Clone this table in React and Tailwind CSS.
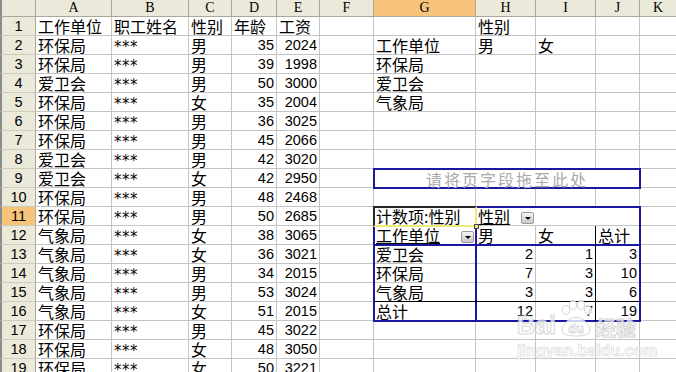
import React from 'react';

const COLS = ['A', 'B', 'C', 'D', 'E', 'F', 'G', 'H', 'I', 'J', 'K'];
const COL_START = ['col-start-1', 'col-start-2', 'col-start-3', 'col-start-4', 'col-start-5', 'col-start-6', 'col-start-7', 'col-start-8', 'col-start-9', 'col-start-10', 'col-start-11', 'col-start-12'];
const ROW_START = ['row-start-1', 'row-start-2', 'row-start-3', 'row-start-4', 'row-start-5', 'row-start-6', 'row-start-7', 'row-start-8', 'row-start-9', 'row-start-10', 'row-start-11', 'row-start-12', 'row-start-13', 'row-start-14', 'row-start-15', 'row-start-16', 'row-start-17', 'row-start-18', 'row-start-19', 'row-start-20'];

const CJK = "font-['Noto_Sans_CJK_SC',sans-serif] text-[16px]";
const NUM = "font-['Liberation_Sans',Arial,sans-serif] text-[14.5px]";

// source list, columns A..E
const rows = [
  ['工作单位', '职工姓名', '性别', '年龄', '工资'],
  ['环保局', '***', '男', 35, 2024],
  ['环保局', '***', '男', 39, 1998],
  ['爱卫会', '***', '男', 50, 3000],
  ['环保局', '***', '女', 35, 2004],
  ['环保局', '***', '男', 36, 3025],
  ['环保局', '***', '男', 45, 2066],
  ['爱卫会', '***', '男', 42, 3020],
  ['爱卫会', '***', '女', 42, 2950],
  ['环保局', '***', '男', 48, 2468],
  ['环保局', '***', '男', 50, 2685],
  ['气象局', '***', '女', 38, 3065],
  ['气象局', '***', '女', 36, 3021],
  ['气象局', '***', '男', 34, 2015],
  ['气象局', '***', '男', 53, 3024],
  ['气象局', '***', '女', 51, 2015],
  ['环保局', '***', '男', 45, 3022],
  ['环保局', '***', '女', 48, 3050],
  ['环保局', '***', '女', 50, 3221],
];

// everything right of the list
const side = {
  H1: '性别', G2: '工作单位', H2: '男', I2: '女', G3: '环保局', G4: '爱卫会', G5: '气象局',
  G11: '计数项:性别',
  H12: '男', I12: '女', J12: '总计',
  G13: '爱卫会', H13: 2, I13: 1, J13: 3,
  G14: '环保局', H14: 7, I14: 3, J14: 10,
  G15: '气象局', H15: 3, I15: 3, J15: 6,
  G16: '总计', H16: 12, I16: 7, J16: 19,
};

const NO_RIGHT = ['G9', 'H9', 'I9', 'H11', 'I11'];

const DropButton = () => (
  <span className="mb-[1px] mr-[1px] ml-auto flex h-[12px] w-[13px] shrink-0 items-center justify-center rounded-[2px] border border-[#9a9a9a] bg-linear-to-b from-[#f6f6f6] to-[#c9c9c9]">
    <span className="h-0 w-0 border-x-[3px] border-t-[3px] border-x-transparent border-t-black" />
  </span>
);

const Text = ({ value }) => {
  if (typeof value === 'number') {
    return <span className={`${NUM} leading-[18px] text-black`}>{value}</span>;
  }
  if (value === '***') {
    return <span className="translate-y-[2px] font-['DejaVu_Sans',sans-serif] text-[15px] tracking-[0.5px] leading-[18px] text-black">***</span>;
  }
  return <span className={`${CJK} leading-[18px] text-black`}>{value}</span>;
};

const Cell = ({ c, r, value, children }) => {
  const name = COLS[c] + r;
  const isNum = typeof value === 'number';
  return (
    <div
      className={`${COL_START[c + 1]} ${ROW_START[r]} flex items-end whitespace-nowrap border-b border-[#c4c4c4] bg-white ${NO_RIGHT.includes(name) ? 'border-r border-r-white' : c === 10 ? '' : 'border-r'} ${isNum ? 'justify-end pr-[2px]' : 'pl-[2px]'}`}
    >
      {children || (value !== undefined && <Text value={value} />)}
    </div>
  );
};

export default function App() {
  const cells = [];

  cells.push(
    <div key="corner" className="col-start-1 row-start-1 border-l-2 border-r border-b border-l-[#8c8c8c] border-r-[#aca899] border-b-[#aca899] bg-[#ebe9d9]" />
  );
  COLS.forEach((L, i) =>
    cells.push(
      <div
        key={L}
        className={`${COL_START[i + 1]} row-start-1 flex items-center justify-center border-b border-[#aca899] ${i === 10 ? '' : 'border-r'} ${L === 'G' ? 'bg-[#f8c47b]' : 'bg-[#ebe9d9]'} font-['Liberation_Serif',serif] text-[14px] leading-none text-black`}
      >
        {L}
      </div>
    )
  );

  for (let r = 1; r <= 19; r++) {
    cells.push(
      <div
        key={'h' + r}
        className={`col-start-1 ${ROW_START[r]} flex items-end justify-center border-l-2 border-r border-b border-l-[#8c8c8c] border-r-[#aca899] border-b-[#cfccbd] ${r === 11 ? 'bg-[#f8c47b]' : 'bg-[#ebe9d9]'}`}
      >
        <span className={`${NUM} leading-[18px] text-black`}>{r}</span>
      </div>
    );
    COLS.forEach((L, c) => {
      const name = L + r;
      const value = c < 5 ? rows[r - 1][c] : side[name];
      if (name === 'H11') {
        cells.push(
          <Cell key={name} c={c} r={r}>
            <span className={`${CJK} leading-[18px] text-black underline decoration-1 underline-offset-[1px]`}>性别</span>
            <DropButton />
          </Cell>
        );
      } else if (name === 'G12') {
        cells.push(
          <Cell key={name} c={c} r={r}>
            <span className={`${CJK} leading-[18px] text-black underline decoration-1 underline-offset-[1px]`}>工作单位</span>
            <DropButton />
          </Cell>
        );
      } else {
        cells.push(<Cell key={name} c={c} r={r} value={value} />);
      }
    });
  }

  return (
    <div className="relative h-[372px] w-[676px] overflow-hidden bg-white">
      <div className="grid grid-cols-[36px_76px_77px_43px_45px_43px_54px_102px_60px_60px_44px_1fr] grid-rows-[17px_repeat(19,19px)]">
        {cells}

        {/* page field drop zone */}
        <div className="pointer-events-none col-start-8 col-end-12 row-start-10 row-end-11 -m-px flex items-center justify-center border-2 border-[#1818a0] bg-white">
          <span className={`${CJK} tracking-[2px] leading-[16px] text-[#a9a9a9]`}>请将页字段拖至此处</span>
        </div>

        {/* pivot table frame */}
        <div className="pointer-events-none col-start-8 col-end-12 row-start-12 row-end-18 -m-px border-2 border-[#1818a0]" />
        <div className="pointer-events-none col-start-8 col-end-9 row-start-12 row-end-18 -mr-px border-r-2 border-[#1818a0]" />
        <div className="pointer-events-none col-start-8 col-end-12 row-start-13 row-end-14 -mb-px border-b-2 border-[#1818a0]" />
        <div className="pointer-events-none col-start-11 col-end-12 row-start-13 row-end-18 -ml-px border-l border-black" />
        <div className="pointer-events-none col-start-8 col-end-12 row-start-17 row-end-18 -mt-px border-t border-black" />

        {/* active cell G11 */}
        <div className="pointer-events-none relative col-start-8 row-start-12 -m-px border-2 border-t-[#262626] border-l-[#262626] border-r-[#eeea74] border-b-[#eeea74]">
          <span className="absolute -right-[4px] -bottom-[4px] h-[5px] w-[5px] border border-[#444] bg-[#eeea74]" />
        </div>
      </div>

      {/* watermark */}
      <div className="pointer-events-none absolute left-[517px] top-[300px] flex flex-col opacity-80">
        <div className="flex items-end">
          <span className="font-['Liberation_Sans',sans-serif] text-[25px] font-bold leading-none text-white [-webkit-text-stroke:1px_#cdcdcd]">Bai</span>
          <svg width="38" height="38" viewBox="0 0 38 38" className="mx-[1px]">
            <g fill="#fff" stroke="#cdcdcd" strokeWidth="1">
              <ellipse cx="9" cy="10" rx="3.5" ry="4.5" />
              <ellipse cx="16" cy="5" rx="3.5" ry="4.5" />
              <ellipse cx="24" cy="5" rx="3.5" ry="4.5" />
              <ellipse cx="31" cy="10" rx="3.5" ry="4.5" />
              <path d="M6 33 C3 27 10 18 19 17 C28 18 35 27 32 33 C28 37 10 37 6 33 Z" />
            </g>
            <text x="19" y="33" textAnchor="middle" fontFamily="Liberation Sans, sans-serif" fontWeight="bold" fontSize="13" fill="#fff" stroke="#cdcdcd" strokeWidth="0.8">du</text>
          </svg>
          <span className="font-['Noto_Sans_CJK_SC',sans-serif] text-[20px] font-bold leading-none text-white [-webkit-text-stroke:1px_#cdcdcd]">经验</span>
        </div>
        <span className="mt-[5px] font-['Liberation_Sans',sans-serif] text-[16px] font-bold leading-none text-white [-webkit-text-stroke:0.7px_#d2d2d2]">jingyan.baidu.com</span>
      </div>
    </div>
  );
}
